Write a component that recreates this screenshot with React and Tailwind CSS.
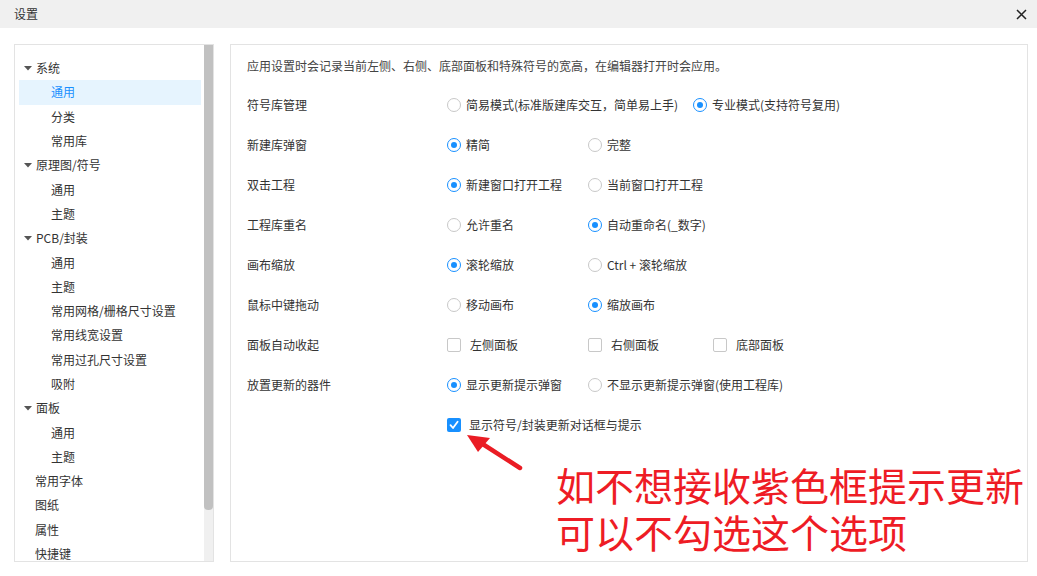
import React from "react";

const font = { fontFamily: '"Noto Sans CJK SC", "Noto Sans", sans-serif' };

function Radio({ checked }) {
  return checked ? (
    <span className="w-[14px] h-[14px] rounded-full border border-[#1890ff] flex items-center justify-center shrink-0">
      <span className="w-[6px] h-[6px] rounded-full bg-[#1890ff]" />
    </span>
  ) : (
    <span className="w-[14px] h-[14px] rounded-full border border-[#c8c8c8] bg-white shrink-0" />
  );
}

function Check({ checked }) {
  return checked ? (
    <span className="w-[14px] h-[14px] rounded-[2px] bg-[#1890ff] flex items-center justify-center shrink-0">
      <svg width="10" height="10" viewBox="0 0 10 10">
        <path d="M1.5 5.2 L4 8 L8.6 1.8" stroke="white" strokeWidth="1.8" fill="none" strokeLinecap="round" strokeLinejoin="round" />
      </svg>
    </span>
  ) : (
    <span className="w-[14px] h-[14px] rounded-[2px] border border-[#c8c8c8] bg-white shrink-0" />
  );
}

const tree = [
  { t: "系统", lvl: 0, arrow: true },
  { t: "通用", lvl: 1, sel: true },
  { t: "分类", lvl: 1 },
  { t: "常用库", lvl: 1 },
  { t: "原理图/符号", lvl: 0, arrow: true },
  { t: "通用", lvl: 1 },
  { t: "主题", lvl: 1 },
  { t: "PCB/封装", lvl: 0, arrow: true },
  { t: "通用", lvl: 1 },
  { t: "主题", lvl: 1 },
  { t: "常用网格/栅格尺寸设置", lvl: 1 },
  { t: "常用线宽设置", lvl: 1 },
  { t: "常用过孔尺寸设置", lvl: 1 },
  { t: "吸附", lvl: 1 },
  { t: "面板", lvl: 0, arrow: true },
  { t: "通用", lvl: 1 },
  { t: "主题", lvl: 1 },
  { t: "常用字体", lvl: 0 },
  { t: "图纸", lvl: 0 },
  { t: "属性", lvl: 0 },
  { t: "快捷键", lvl: 0 },
];

const rows = [
  { label: "符号库管理", opts: [{ t: "简易模式(标准版建库交互，简单易上手)", c: false }, { t: "专业模式(支持符号复用)", c: true }], kind: "radio" },
  { label: "新建库弹窗", opts: [{ t: "精简", c: true }, { t: "完整", c: false }], kind: "radio" },
  { label: "双击工程", opts: [{ t: "新建窗口打开工程", c: true }, { t: "当前窗口打开工程", c: false }], kind: "radio" },
  { label: "工程库重名", opts: [{ t: "允许重名", c: false }, { t: "自动重命名(_数字)", c: true }], kind: "radio" },
  { label: "画布缩放", opts: [{ t: "滚轮缩放", c: true }, { t: "Ctrl + 滚轮缩放", c: false }], kind: "radio" },
  { label: "鼠标中键拖动", opts: [{ t: "移动画布", c: false }, { t: "缩放画布", c: true }], kind: "radio" },
  { label: "面板自动收起", opts: [{ t: "左侧面板", c: false }, { t: "右侧面板", c: false }, { t: "底部面板", c: false }], kind: "check" },
  { label: "放置更新的器件", opts: [{ t: "显示更新提示弹窗", c: true }, { t: "不显示更新提示弹窗(使用工程库)", c: false }], kind: "radio" },
];

export default function App() {
  return (
    <div className="w-[1037px] h-[576px] bg-white relative overflow-hidden text-[12px] text-[#333]" style={font}>
      {/* title bar */}
      <div className="h-[28px] bg-[#f0f0f0] flex items-center justify-between pl-[14px] pr-[10px]">
        <span className="text-[12px] text-[#333]">设置</span>
        <svg width="11" height="11" viewBox="0 0 11 11">
          <path d="M1 1 L10 10 M10 1 L1 10" stroke="#222" strokeWidth="1.5" />
        </svg>
      </div>

      <div className="flex pl-[14px] pt-[16px] gap-[16px]">
        {/* left tree */}
        <div className="w-[200px] h-[518px] border border-[#e3e3e3] flex overflow-hidden">
          <div className="flex-1 pt-[11px] pl-[4px] pr-[3px]">
            {tree.map((n, i) => (
              <div
                key={i}
                className={`h-[24.3px] flex items-center ${n.sel ? "bg-[#e6f4fe] text-[#1890ff]" : "text-[#333]"} ${n.lvl === 1 ? "pl-[32px]" : n.arrow ? "pl-[2px]" : "pl-[16px]"}`}
              >
                {n.arrow && (
                  <svg width="14" height="10" viewBox="0 0 14 10" className="mr-[1px]">
                    <path d="M3 3 L11 3 L7 7.5 Z" fill="#555" />
                  </svg>
                )}
                <span>{n.t}</span>
              </div>
            ))}
          </div>
          <div className="w-[9px] bg-[#f0f0f0] shrink-0">
            <div className="h-[465px] bg-[#c1c1c1] rounded-b-[4px]" />
          </div>
        </div>

        {/* right content */}
        <div className="w-[798px] h-[518px] border border-[#e3e3e3] pl-[16px] pt-[11px]">
          <div className="h-[19px] flex items-center text-[#444]">应用设置时会记录当前左侧、右侧、底部面板和特殊符号的宽高，在编辑器打开时会应用。</div>
          <div className="pt-[10px]">
            {rows.map((r, i) => (
              <div key={i} className="h-[40px] flex items-center">
                <span className="w-[200px] text-[#333]">{r.label}</span>
                {r.opts.map((o, j) => (
                  <div
                    key={j}
                    className={`flex items-center ${r.kind === "check" ? "gap-[9px]" : "gap-[5px]"} ${r.kind === "check" ? (j === 0 ? "w-[141px]" : j === 1 ? "w-[125px]" : "") : j === 0 ? (i === 0 ? "w-[246px]" : "w-[141px]") : ""}`}
                  >
                    {r.kind === "radio" ? <Radio checked={o.c} /> : <Check checked={o.c} />}
                    <span>{o.t}</span>
                  </div>
                ))}
              </div>
            ))}
            <div className="h-[40px] flex items-center pl-[200px] gap-[8px]">
              <Check checked />
              <span>显示符号/封装更新对话框与提示</span>
            </div>
          </div>
        </div>
      </div>

      {/* annotation arrow */}
      <svg className="absolute left-[460px] top-[428px]" width="70" height="50" viewBox="0 0 70 50">
        <path d="M60 40 L18 13" stroke="#ea1c24" strokeWidth="4.5" strokeLinecap="round" />
        <path d="M7 7 L30 10 L18 24 Z" fill="#ea1c24" />
      </svg>

      {/* annotation text */}
      <div
        className="absolute left-[556px] top-[461px] text-[#ee1c25] text-[39px] leading-[47px]"
        style={{ fontFamily: '"Noto Sans CJK SC", sans-serif' }}
      >
        <div>如不想接收紫色框提示更新</div>
        <div>可以不勾选这个选项</div>
      </div>
    </div>
  );
}
